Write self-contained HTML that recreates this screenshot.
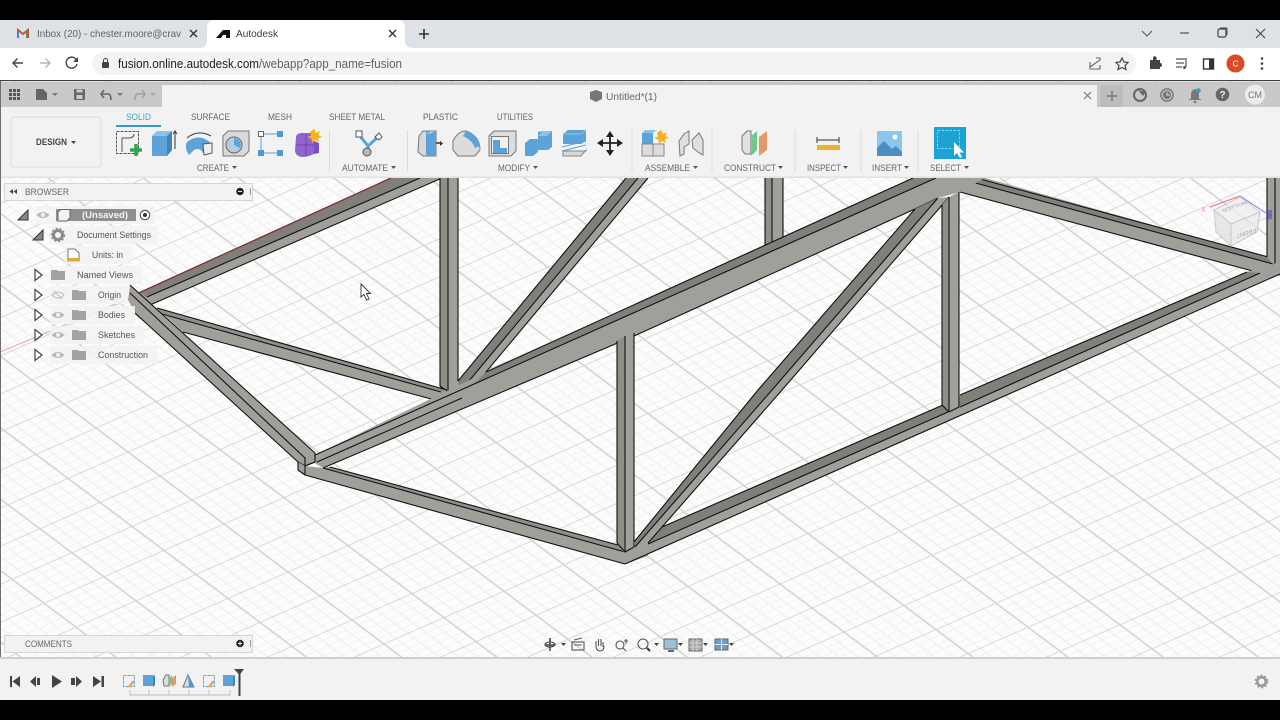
<!DOCTYPE html>
<html><head><meta charset="utf-8"><title>Autodesk</title>
<style>
html,body{margin:0;padding:0;background:#000;width:1280px;height:720px;overflow:hidden}
svg{display:block;filter:blur(.35px)}
text{font-family:"Liberation Sans",sans-serif;fill:#666;font-size:9px}
.t{font-size:9px;fill:#666}
.f{fill:#a09f9a}
.d{fill:#807f7a}
.m{fill:#8f8e89}
.ln{stroke:#111;stroke-width:1.1;fill:none;stroke-linejoin:round}
.row{fill:#f2f2f2;fill-opacity:.88}
.tree{font-size:9px;fill:#555}
</style></head><body>
<svg width="1280" height="720" viewBox="0 0 1280 720" xmlns="http://www.w3.org/2000/svg">
<defs>
<pattern id="grid" width="50" height="50" patternUnits="userSpaceOnUse" patternTransform="matrix(1.2 -.528 .64 .48 12 8)">
<rect width="50" height="50" fill="#fcfcfc"/>
<path d="M10 0V50M20 0V50M30 0V50M40 0V50M0 10H50M0 20H50M0 30H50M0 40H50" stroke="#efefef" stroke-width="1" fill="none"/>
<path d="M0 0V50M0 0H50M50 0V50M0 50H50" stroke="#d4d4d4" stroke-width="1.400" fill="none"/>
</pattern>
<g id="eye"><path d="M-6.500 0Q0 -6 6.500 0Q0 6 -6.500 0Z" fill="#b5b5b5"/><circle r="2.200" fill="#eee"/></g>
<path id="folder" d="M-7 -5H-1L0 -4H7V5H-7Z" fill="#a3a3a3"/>
<path id="tri" d="M-3 -5.500L4 0L-3 5.500Z" fill="#fff" stroke="#444" stroke-width="1.200"/>
<path id="solidtri" d="M5 -5V5H-5Z" fill="#888" stroke="#333" stroke-width="1"/>
</defs>

<rect width="1280" height="720" fill="#000"/>

<!-- browser chrome -->
<rect y="20" width="1280" height="28" fill="#dee1e6"/>
<path d="M199 48Q207 48 207 40V28Q207 20 215 20H397Q405 20 405 28V40Q405 48 413 48Z" fill="#fff"/>
<rect y="48" width="1280" height="32" fill="#fff"/>
<rect x="92" y="52" width="1044" height="23" rx="11.500" fill="#f1f3f4"/>
<path d="M18 38V30L23 34L28 30V38" fill="none" stroke="#d54c3f" stroke-width="2"/>
<path d="M27 38V30" stroke="#3d9a5c" stroke-width="2"/><path d="M18 38V31" stroke="#4a7fd0" stroke-width="2"/>
<text x="37" y="37" style="font-size:10.500px;fill:#5f6368" textLength="144" lengthAdjust="spacingAndGlyphs">Inbox (20) - chester.moore@crav</text>
<path d="M190 30L197 37M197 30L190 37" stroke="#333" stroke-width="1.400"/>
<path d="M216 38L223 30H230V38H226V35H223L221 38Z" fill="#111"/>
<text x="236" y="37" style="font-size:10.500px;fill:#3c4043" textLength="42" lengthAdjust="spacingAndGlyphs">Autodesk</text>
<path d="M389 30L396 37M396 30L389 37" stroke="#333" stroke-width="1.400"/>
<path d="M424 29V39M419 34H429" stroke="#333" stroke-width="1.600"/>
<path d="M1142 31L1147 36L1152 31" fill="none" stroke="#555" stroke-width="1"/>
<path d="M1180 33H1189" stroke="#444" stroke-width="1.100"/>
<rect x="1218" y="29" width="8" height="8" rx="1.500" fill="none" stroke="#444" stroke-width="1.200"/>
<path d="M1220 28H1227V35" fill="none" stroke="#444" stroke-width=".9"/>
<path d="M1256 29L1265 38M1265 29L1256 38" stroke="#444" stroke-width="1.100"/>
<path d="M23 63H13M17.500 58.500L13 63L17.500 67.500" fill="none" stroke="#444" stroke-width="1.400"/>
<path d="M40 63H50M45.500 58.500L50 63L45.500 67.500" fill="none" stroke="#b5b5b5" stroke-width="1.400"/>
<path d="M76.500 60A5.500 5.500 0 1 0 77 64" fill="none" stroke="#444" stroke-width="1.400"/><path d="M78 57V62H73Z" fill="#444"/>
<rect x="102" y="62" width="7" height="6" rx="1" fill="#444"/><path d="M103.500 62V60.500A2 2 0 0 1 107.500 60.500V62" fill="none" stroke="#444" stroke-width="1"/>
<text x="118" y="68" style="font-size:12.500px;fill:#202124" textLength="141" lengthAdjust="spacingAndGlyphs">fusion.online.autodesk.com</text>
<text x="259" y="68" style="font-size:12.500px;fill:#5f6368" textLength="143" lengthAdjust="spacingAndGlyphs">/webapp?app_name=fusion</text>
<path d="M1096 58H1100V60L1090 67M1090 62V69H1100V65" fill="none" stroke="#666" stroke-width="1.100"/>
<path d="M1122 58L1124 62L1128 62.500L1125 65.500L1126 69.500L1122 67.500L1118 69.500L1119 65.500L1116 62.500L1120 62Z" fill="none" stroke="#444" stroke-width="1.200"/>
<path d="M1150 60H1153V58A1.700 1.700 0 0 1 1156.500 58V60H1160V63A1.700 1.700 0 0 1 1160 67V69H1150Z" fill="#444"/>
<path d="M1176 59H1187M1176 63H1184M1176 67H1182" stroke="#555" stroke-width="1.200"/><path d="M1186 60V67" stroke="#555" stroke-width="1.200"/><circle cx="1184.500" cy="67.500" r="1.500" fill="#555"/>
<rect x="1203.500" y="59" width="10" height="10" fill="none" stroke="#333" stroke-width="1.400"/><rect x="1209" y="59" width="4.500" height="10" fill="#333"/>
<circle cx="1235.500" cy="63.500" r="9" fill="#dc4a22"/>
<text x="1232.500" y="66.500" style="font-size:8.500px;fill:#fff">C</text>
<circle cx="1262" cy="58.500" r="1.300" fill="#444"/><circle cx="1262" cy="63.500" r="1.300" fill="#444"/><circle cx="1262" cy="68.500" r="1.300" fill="#444"/>

<rect y="80" width="1280" height="1.500" fill="#3f3f3f"/>

<!-- viewport -->
<rect y="81" width="1280" height="619" fill="url(#grid)"/>
<path d="M0 352L132 297" stroke="#e2a6ab" stroke-width="1" fill="none"/>

<!-- TRUSS -->
<path class="f" d="M140 293L391 178H442L150 305Z"/>
<path class="d" d="M140 293L391 178H420L147 297Z"/>
<path d="M132 296L391 178" stroke="#7a2f3a" stroke-width="1.300" fill="none"/>
<path class="ln" d="M147 297L420 178M150 305L442 178"/>
<path class="f" d="M765 178H783V249L772 253L765 247Z"/>
<path class="m" d="M765 178H772V253L765 247Z"/>
<path class="ln" d="M765 178V247L772 253L783 249V178M772 178V253"/>
<path class="f" d="M440 178H458V390L448 396L440 388Z"/>
<path class="m" d="M440 178H448V396L440 388Z"/>
<path class="ln" d="M440 178V386L448 392M448 178V394M458 178V381"/>
<path class="f" d="M458 381L626 178H648L486 372L476 386L459 393Z"/>
<path class="d" d="M458 381L626 178H638L459 393Z"/>
<path class="ln" d="M458 381L626 178M459 393L638 178M476 384L648 178"/>
<path class="f" d="M157 308L447 390L435 400L183 332Z"/>
<path class="m" d="M157 308L447 390L441 392L162 314Z"/>
<path class="ln" d="M157 308L447 390M162 314L441 392M183 332L435 400"/>
<path class="f" d="M945 192L972 178H985L1267 257L1280 262V276L1260 273L960 192Z"/>
<path class="d" d="M980 179L1272 258L1273 264L972 182Z"/>
<path class="ln" d="M980 179L1272 258L1273 264L972 182M960 192L1260 273"/>
<path class="f" d="M1267 178H1280V270L1273 264L1267 257Z"/>
<path class="ln" d="M1267 178V257M1275 178V266"/>
<path class="f" d="M315 455L486 372L913 178H985L960 192L938 198L915 209L634 336L323 468L315 463Z"/>
<path class="d" d="M486 372L913 178H936L474 384Z"/>
<path class="ln" d="M315 455L936 178M486 372L913 178M317 462L462 398M323 468L634 336L915 209L938 198"/>
<path class="f" d="M130 285L315 453V462L305 466L298 462L135 313L128 300Z"/>
<path class="ln" d="M130 285L315 453V462L305 466L298 462L135 313M130 293L305 458V466"/>
<path class="f" d="M298 462L305 466L323 468L330 467L618 545L625 552L634 547L648 543L648 556L625 564L305 475L298 470Z"/>
<path class="m" d="M330 467L618 545L625 552L323 468Z"/>
<path class="ln" d="M298 462V470L305 475L625 564M305 466V475M305 466L315 462M330 467L618 545M323 468L625 552"/>
<path class="f" d="M617 341L625 334L634.500 333V547L625 554L617 543Z"/>
<path class="m" d="M617 341L625 336V554L617 543Z"/>
<path class="ln" d="M617 341V543L625 552L634 547V333M625 336V552"/>
<path class="f" d="M625 564L1280 274V262L1247 272L959 397L943 405L662 527L648 543L634 547Z"/>
<path class="d" d="M662 527L943 405L948 412L648 544Z"/>
<path class="d" d="M960 395L1247 272L1260 273L960 407Z"/>
<path class="ln" d="M625 564L1280 274M662 527L943 405M648 544L948 412M960 395L1247 272M960 407L1260 273"/>
<path class="f" d="M634 542L758 390L915 209L938 198L949 197L782 390L648 543L635 547Z"/>
<path class="d" d="M634 542L758 390L915 209L937.500 198.500L772 390L635 547Z"/>
<path class="ln" d="M634 542L758 390L915 209M635 547L772 390L937.500 198.500M648 543L782 390L949 197"/>
<path class="f" d="M942 205L949 197L959 192V407L949 412L942 405Z"/>
<path class="m" d="M942 205L949 197V412L942 405Z"/>
<path class="ln" d="M942 205V405L949 412L959 407V192M949 197V412"/>

<!-- view cube -->
<g opacity=".75">
<path d="M1210 207L1240 196" stroke="#d8657f" stroke-width="1.300"/>
<path d="M1240 196L1266 213" stroke="#7676cc" stroke-width="1.300"/>
<path d="M1268 210H1272V219H1268Z" fill="#6060c0"/>
<text x="1201" y="212" style="font-size:7px;fill:#d8657f">X</text>
<path d="M1214 210L1240 197L1260 212L1231 224Z" fill="#eee" stroke="#bbb"/>
<path d="M1214 210L1231 224V246L1216 232Z" fill="#e2e2e2" stroke="#bbb"/>
<path d="M1231 224L1260 212L1257 232L1231 246Z" fill="#e8e8e8" stroke="#bbb"/>
<text transform="matrix(.95 -.35 .6 .6 1224 212)" style="font-size:6px;fill:#888">BOTTOM</text>
<text transform="matrix(-.95 .3 0 -1 1256 228)" style="font-size:6px;fill:#888">FRONT</text>
</g>

<!-- top toolbar -->
<rect y="81.500" width="1280" height="96.500" fill="#f2f2f2"/>
<rect y="176.500" width="1280" height="1.500" fill="#e2e2e2"/>
<rect y="81.500" width="1280" height="3.500" fill="#c6c6c6"/>
<rect y="85" width="162" height="22" fill="#c9c9c9"/>
<rect x="1097" y="85" width="183" height="22" fill="#c9c9c9"/>
<rect x="1100" y="85" width="23" height="22" fill="#bdbdbd"/>
<rect x="0" y="81" width="1" height="619" fill="#6e6e6e"/>
<g fill="#555"><rect x="9" y="89" width="3" height="3"/><rect x="13" y="89" width="3" height="3"/><rect x="17" y="89" width="3" height="3"/><rect x="9" y="93" width="3" height="3"/><rect x="13" y="93" width="3" height="3"/><rect x="17" y="93" width="3" height="3"/><rect x="9" y="97" width="3" height="3"/><rect x="13" y="97" width="3" height="3"/><rect x="17" y="97" width="3" height="3"/></g>
<path d="M36 89H43L47 93V100H36Z" fill="#666"/><path d="M52 93H58L55 96Z" fill="#777"/>
<rect x="74" y="89" width="11" height="11" rx="1" fill="#666"/><rect x="76.500" y="89.500" width="6" height="3" fill="#ccc"/><rect x="76.500" y="95" width="6" height="4" fill="#ccc"/>
<path d="M104 90L101 94L104 98M101 94H108Q111 94 111 100" fill="none" stroke="#666" stroke-width="1.600"/><path d="M117 93H123L120 96Z" fill="#777"/>
<path d="M142 90L145 94L142 98M145 94H138Q135 94 135 100" fill="none" stroke="#a0a0a0" stroke-width="1.600"/><path d="M150 93H156L153 96Z" fill="#a5a5a5"/>
<path d="M590 92L596 90L602 92V99L596 102L590 99Z" fill="#777"/>
<text x="606" y="100" style="font-size:10.500px;fill:#666" textLength="51" lengthAdjust="spacingAndGlyphs">Untitled*(1)</text>
<path d="M1084 92L1091 99M1091 92L1084 99" stroke="#777" stroke-width="1.200"/>
<path d="M1112 91V101M1107 96H1117" stroke="#888" stroke-width="2"/>
<circle cx="1140" cy="95" r="6" fill="none" stroke="#666" stroke-width="2"/><path d="M1138 90L1146 92L1143 96Z" fill="#666"/>
<circle cx="1167" cy="95" r="7" fill="#888"/><circle cx="1167" cy="95" r="4.500" fill="#777" stroke="#ddd" stroke-width=".8"/><path d="M1167 92V95H1170" stroke="#ddd" fill="none"/>
<path d="M1195 89Q1199 90 1199 95V99H1201V100H1189V99H1191V95Q1191 90 1195 89Z" fill="#777"/><circle cx="1195" cy="102" r="1.300" fill="#777"/><circle cx="1198.500" cy="90.500" r="2.300" fill="#2a9fd0"/>
<circle cx="1222.500" cy="94.500" r="6.800" fill="#666"/><text x="1219.500" y="98" style="font-size:10px;font-weight:bold;fill:#eee">?</text>
<circle cx="1255" cy="94.500" r="10" fill="#ececec"/><text x="1248" y="98" style="font-size:9px;fill:#777" textLength="14">CM</text>

<text x="126" y="120" style="fill:#3f9fc6" textLength="25" lengthAdjust="spacingAndGlyphs">SOLID</text>
<rect x="116" y="125" width="45" height="2" fill="#2f9dc6"/>
<text x="191" y="120" class="t" textLength="39" lengthAdjust="spacingAndGlyphs">SURFACE</text>
<text x="268" y="120" class="t" textLength="24" lengthAdjust="spacingAndGlyphs">MESH</text>
<text x="329" y="120" class="t" textLength="56" lengthAdjust="spacingAndGlyphs">SHEET METAL</text>
<text x="423" y="120" class="t" textLength="35" lengthAdjust="spacingAndGlyphs">PLASTIC</text>
<text x="497" y="120" class="t" textLength="36" lengthAdjust="spacingAndGlyphs">UTILITIES</text>

<rect x="11" y="117" width="90" height="50" rx="3" fill="#f2f2f2" stroke="#dcdcdc"/>
<text x="36" y="145" style="fill:#444;font-weight:bold" textLength="31" lengthAdjust="spacingAndGlyphs">DESIGN</text>
<path d="M71 141H76L73.500 144Z" fill="#444"/>

<path d="M329.500 130V172M407.500 130V172M632 130V172M712 130V172M795 130V172M861 130V172M918 130V172" stroke="#dcdcdc"/>

<g>
<text x="197" y="171" class="t" textLength="32" lengthAdjust="spacingAndGlyphs">CREATE</text><path d="M232 166H237L234.500 169Z" fill="#555"/>
<text x="342" y="171" class="t" textLength="46" lengthAdjust="spacingAndGlyphs">AUTOMATE</text><path d="M391 166H396L393.500 169Z" fill="#555"/>
<text x="498" y="171" class="t" textLength="32" lengthAdjust="spacingAndGlyphs">MODIFY</text><path d="M533 166H538L535.500 169Z" fill="#555"/>
<text x="645" y="171" class="t" textLength="45" lengthAdjust="spacingAndGlyphs">ASSEMBLE</text><path d="M693 166H698L695.500 169Z" fill="#555"/>
<text x="724" y="171" class="t" textLength="52" lengthAdjust="spacingAndGlyphs">CONSTRUCT</text><path d="M778 166H783L780.500 169Z" fill="#555"/>
<text x="807" y="171" class="t" textLength="34" lengthAdjust="spacingAndGlyphs">INSPECT</text><path d="M843 166H848L845.500 169Z" fill="#555"/>
<text x="872" y="171" class="t" textLength="30" lengthAdjust="spacingAndGlyphs">INSERT</text><path d="M904 166H909L906.500 169Z" fill="#555"/>
<text x="930" y="171" class="t" textLength="31" lengthAdjust="spacingAndGlyphs">SELECT</text><path d="M964 166H969L966.500 169Z" fill="#555"/>
</g>

<!-- create icons -->
<rect x="116.500" y="131.500" width="22" height="22" fill="none" stroke="#555" stroke-dasharray="3 1"/>
<path d="M122 152V138H128Q134 138 134 134" fill="none" stroke="#555"/>
<path d="M130 150H142M136 144V156" stroke="#2ea44f" stroke-width="3.500"/>
<path d="M152 136L157 131H172V150L167 156H152Z" fill="#5ba3d9"/><path d="M167 136H152L157 131H172Z" fill="#8fc4ea"/><path d="M167 136V156L172 150V131Z" fill="#3f86bd"/>
<path d="M175 149V131M173 134L175 131L177 134" stroke="#333" fill="none"/>
<path d="M187 142Q200 132 212 144L211 153H203Q200 147 194 150L189 155Q184 148 187 142Z" fill="#5ba3d9"/><path d="M203 144L212 143V153L204 155Z" fill="#eee" stroke="#555"/><path d="M187 138Q198 129 211 136" fill="none" stroke="#444"/>
<path d="M223 136L228 131H249V151L244 156H223Z" fill="#d9d9d9" stroke="#777"/>
<circle cx="234" cy="145" r="8" fill="#b5cde0" stroke="#666"/><path d="M234 145V138A7 7 0 0 1 240 148Z" fill="#5ba3d9"/>
<path d="M262.500 134H278M261 137V150M262.500 153H278" stroke="#5ba3d9"/>
<rect x="258.500" y="131.500" width="5" height="5" fill="#fff" stroke="#666"/><rect x="277" y="131" width="6" height="6" fill="#4f9ad2"/><rect x="258" y="150" width="6" height="6" fill="#4f9ad2"/><rect x="277" y="150" width="6" height="6" fill="#4f9ad2"/>
<path d="M296 138Q296 133 302 133H314V154Q308 157 302 157Q295 156 295 150Z" fill="#9063d0"/><path d="M296 145H318M306 134V156" stroke="#6e45ad"/><path d="M314 141L319 143V153L314 154Z" fill="#7a4fc0"/>
<path d="M314 129L316 133L320 131L318.500 135L322 137L318 138.500L319 142L315 140L312 143L311.500 139L307.500 137L311 135.500L310 132Z" fill="#f5b21c"/>
<!-- automate -->
<path d="M360 136L368 146L378 137M368 146V151" fill="none" stroke="#5ba3d9" stroke-width="3"/>
<rect x="356" y="131" width="6" height="6" fill="#fff" stroke="#555"/><path d="M379 133L382 137L379 140L375 137Z" fill="#fff" stroke="#555"/><circle cx="367" cy="152" r="4" fill="#b8b8b8" stroke="#555"/>
<!-- modify -->
<path d="M419 136L423 131H436V156H423L418 152Z" fill="#d8d8d8" stroke="#777"/><path d="M426 131H436V156H426Z" fill="#5ba3d9"/><path d="M426 134L430 131H435L431 134Z" fill="#8fc4ea"/>
<path d="M436 143H441" stroke="#333" stroke-width="1.500"/><path d="M440 141L443 143.500L440 146Z" fill="#333"/>
<path d="M453 150V141Q458 131 466 131Q480 136 480 150L475 156H458Z" fill="#dcdcdc" stroke="#777"/><path d="M466 131Q478 135 480 146L475 148Q472 140 463 136Z" fill="#5ba3d9"/>
<path d="M489 136L494 131H516V151L511 156H489Z" fill="#dcdcdc" stroke="#777"/><rect x="491.500" y="136.500" width="17" height="17" fill="#f2f2f2" stroke="#777"/><path d="M493 140H500V148H507V153H493Z" fill="#5ba3d9"/>
<path d="M525 143L530 139H538V132L543 131H552V147L548 150H538V152L533 156H525Z" fill="#5ba3d9"/><path d="M538 136L543 131H552L547 136Z" fill="#8fc4ea"/>
<path d="M563 134L568 130H586V141L581 144H563Z" fill="#5ba3d9"/><path d="M563 134H581L586 130" fill="none" stroke="#8fc4ea"/>
<path d="M562 147L586 141M562 151L586 145" stroke="#5ba3d9" fill="none"/>
<path d="M563 151H586V150L581 156H563Z" fill="#d8d8d8" stroke="#888"/>
<path d="M610 134V152M600 143H620" stroke="#222" stroke-width="1.800"/>
<path d="M610 131L614 137H606ZM610 156L614 150H606ZM597 143L603 139V147ZM623 143L617 139V147Z" fill="#222"/>
<!-- assemble -->
<rect x="642" y="133" width="11" height="11" fill="#5ba3d9"/><path d="M653 133L657 130H645L642 133Z" fill="#8fc4ea"/>
<rect x="642" y="144" width="11" height="12" fill="#dcdcdc" stroke="#888"/><rect x="653" y="144" width="11" height="12" fill="#dcdcdc" stroke="#888"/>
<path d="M661 130L663 134L667 132L665.500 136L669 138L665 139L666 143L662 141L659 144L658.500 140L654.500 138L658 136.500L657 133Z" fill="#f5b21c"/>
<path d="M679 141L684 134L689 131V144L684 147V154L680 156Z" fill="#e0e0e0" stroke="#777"/><path d="M692 140L699 133L703 140V155L698 152L693 148Z" fill="#e0e0e0" stroke="#777"/>
<!-- construct -->
<path d="M742 136L747 131H751V154H745L742 150Z" fill="#e0e0e0" stroke="#777"/><path d="M751 136L757 131V150L751 156Z" fill="#6dcb8a"/>
<path d="M759 137L767 131V150L759 156Z" fill="#e39a6a"/>
<!-- inspect -->
<path d="M817 140H839M817 137V143M839 137V143" stroke="#333"/><rect x="817" y="145" width="23" height="5" fill="#eab42a"/>
<!-- insert -->
<rect x="877" y="131" width="25" height="25" fill="#8cc5ee"/><path d="M877 156V148L884 141L892 149L896 146L902 152V156Z" fill="#4b8ec4"/><circle cx="895" cy="137" r="2.500" fill="#fff"/>
<!-- select -->
<rect x="934" y="127" width="32" height="32" fill="#1ca3d4"/>
<rect x="937.500" y="130.500" width="22" height="18" fill="none" stroke="#7fdcef" stroke-dasharray="2.500 1.500"/>
<path d="M954 142V156L957 153L960 158L962 157L959.500 152.500H964Z" fill="#fff"/>

<!-- browser panel -->
<rect x="4.500" y="183.500" width="248" height="17" fill="#f2f2f2" stroke="#d5d5d5"/>
<path d="M13 189V194L9.500 191.500ZM17 189V194L13.500 191.500Z" fill="#444"/>
<text x="25" y="195" textLength="44" lengthAdjust="spacingAndGlyphs" style="fill:#666">BROWSER</text>
<circle cx="240" cy="191.500" r="3.800" fill="#222"/><path d="M238 191.500H242" stroke="#eee"/>
<path d="M250.500 188V195" stroke="#999"/>

<rect x="35" y="206" width="120" height="18" class="row"/>
<rect x="50" y="226" width="108" height="18" class="row"/>
<rect x="65" y="246" width="67" height="18" class="row"/>
<rect x="50" y="266" width="92" height="18" class="row"/>
<rect x="50" y="286" width="78" height="18" class="row"/>
<rect x="50" y="306" width="85" height="18" class="row"/>
<rect x="50" y="326" width="94" height="18" class="row"/>
<rect x="50" y="346" width="108" height="18" class="row"/>

<use href="#solidtri" x="23" y="215"/><use href="#eye" x="43" y="215"/>
<rect x="56" y="209" width="80" height="12" fill="#8f8f8f"/>
<path d="M58 212L61 209.500H70V218L67 221H58Z" fill="#f2f2f2" stroke="#666"/>
<text x="82" y="218" textLength="46" lengthAdjust="spacingAndGlyphs" style="fill:#f4f4f4;font-weight:bold">(Unsaved)</text>
<circle cx="145" cy="215" r="4.800" fill="#fff" stroke="#444"/><circle cx="145" cy="215" r="2" fill="#333"/>

<use href="#solidtri" x="38" y="235"/>
<circle cx="58" cy="235" r="4.500" fill="none" stroke="#8a8a8a" stroke-width="3"/><circle cx="58" cy="235" r="6.500" fill="none" stroke="#8a8a8a" stroke-width="1.500" stroke-dasharray="2 2"/>
<text x="77" y="238" class="tree" textLength="74" lengthAdjust="spacingAndGlyphs">Document Settings</text>

<path d="M68 249H75L79 253V261H68Z" fill="#fff" stroke="#777"/><rect x="67" y="258" width="12" height="3.500" fill="#d9ad3b"/>
<text x="92" y="258" class="tree" textLength="31" lengthAdjust="spacingAndGlyphs">Units: in</text>

<use href="#tri" x="38" y="275"/><use href="#folder" x="58" y="275"/>
<text x="77" y="278" class="tree" textLength="56" lengthAdjust="spacingAndGlyphs">Named Views</text>

<use href="#tri" x="38" y="295"/>
<path d="M52 295Q58 289 64 295Q58 301 52 295Z" fill="none" stroke="#bbb"/><path d="M54 291L62 299" stroke="#bbb"/>
<use href="#folder" x="79" y="295"/>
<text x="98" y="298" class="tree" textLength="23" lengthAdjust="spacingAndGlyphs">Origin</text>

<use href="#tri" x="38" y="315"/><use href="#eye" x="58" y="315"/><use href="#folder" x="79" y="315"/>
<text x="98" y="318" class="tree" textLength="27" lengthAdjust="spacingAndGlyphs">Bodies</text>

<use href="#tri" x="38" y="335"/><use href="#eye" x="58" y="335"/><use href="#folder" x="79" y="335"/>
<text x="98" y="338" class="tree" textLength="37" lengthAdjust="spacingAndGlyphs">Sketches</text>

<use href="#tri" x="38" y="355"/><use href="#eye" x="58" y="355"/><use href="#folder" x="79" y="355"/>
<text x="98" y="358" class="tree" textLength="50" lengthAdjust="spacingAndGlyphs">Construction</text>

<!-- cursor -->
<path d="M361 284V297L364 294.500L366.500 300L369 299L366.500 293.500H370.500Z" fill="#fff" stroke="#333" stroke-width=".9"/>

<!-- comments -->
<rect x="4.500" y="635.500" width="248" height="17" fill="#f2f2f2" stroke="#d5d5d5"/>
<text x="25" y="647" textLength="47" lengthAdjust="spacingAndGlyphs" style="fill:#666">COMMENTS</text>
<circle cx="240" cy="643.500" r="3.800" fill="#222"/><path d="M238 643.500H242M240 641.500V645.500" stroke="#eee"/>
<path d="M250.500 640V647" stroke="#999"/>

<!-- nav bar -->
<g fill="none" stroke="#666" stroke-width="1.100">
<path d="M550 638V651M545 645H555" stroke="#444" stroke-width="1.500"/><ellipse cx="550" cy="644.500" rx="5" ry="2.500" stroke="#444"/>
<rect x="572" y="642" width="12" height="8" stroke="#555"/><path d="M574 640L582 638M574 645H582" stroke="#555"/>
<path d="M596 647V641M598.500 646V639M601 646V639M603 647V642M596 647Q597 651 600 651Q604 651 604 646" stroke="#555"/>
<circle cx="620" cy="645" r="4" stroke="#555"/><path d="M623 648L626 651M626 639V644M624 641H628" stroke="#555"/>
<circle cx="643" cy="644" r="5" stroke="#555"/><path d="M647 648L650 651" stroke="#333" stroke-width="2"/>
</g>
<rect x="664" y="639" width="13" height="10" fill="#9cc0d8" stroke="#666"/><path d="M668 651H674" stroke="#666" stroke-width="2"/>
<rect x="689" y="639" width="13" height="12" fill="#aaa" stroke="#666"/><path d="M693 639V651M697 639V651M689 643H702M689 647H702" stroke="#ddd" stroke-width=".8"/>
<rect x="715" y="639" width="13" height="11" fill="#6f9fc8" stroke="#666"/><path d="M721.500 639V650M715 644.500H728" stroke="#eee"/>
<path d="M561 643H566L563.500 646ZM654 643H659L656.500 646ZM678 643H683L680.500 646ZM703 643H708L705.500 646ZM729 643H734L731.500 646Z" fill="#444"/>

<!-- timeline bar -->
<rect y="657" width="1280" height="2" fill="#cfcfcf"/>
<rect y="659" width="1280" height="41" fill="#f2f2f2"/>
<g fill="#444">
<path d="M10 676H12V687H10ZM20 676V687L12.500 681.500Z"/>
<path d="M36 676V687L30 681.500ZM37 678H40V685H37Z"/>
<path d="M52 675L62 681.500L52 688Z"/>
<path d="M76 676V687L82 681.500ZM71 678H75V685H71Z"/>
<path d="M93 676V687L101 681.500ZM101.500 676H104V687H101.500Z"/>
</g>
<rect x="123.500" y="675.500" width="11" height="11" fill="none" stroke="#5ba3d9" stroke-dasharray="3 1"/><path d="M129 687L134 681" stroke="#e8a33d" stroke-width="2.500"/>
<rect x="143" y="675" width="10" height="11" fill="#5ba3d9"/><path d="M153 676L155 675V685L153 687" fill="#3f86bd"/>
<path d="M163 680L166 675H169V686H164Z" fill="#ddd" stroke="#777"/><path d="M169 678L172 675V684L169 687Z" fill="#6dcb8a"/><path d="M172 678L176 675V684L172 687Z" fill="#e39a6a"/>
<path d="M188 675L194 687H183Z" fill="#cfe0ee" stroke="#777"/><path d="M188 675L194 687H189Z" fill="#4f9ad2"/>
<rect x="203.500" y="675.500" width="11" height="11" fill="none" stroke="#5ba3d9" stroke-dasharray="3 1"/><path d="M209 687L214 681" stroke="#e8a33d" stroke-width="2.500"/>
<rect x="223" y="675" width="10" height="11" fill="#5ba3d9"/><path d="M233 676L235 675V685L233 687" fill="#3f86bd"/>
<path d="M130 690V695H230V690M149 690V695M169 690V695M189 690V695M209 690V695" fill="none" stroke="#bdbdbd"/>
<path d="M234 669H244L239.500 675Z" fill="#444"/><rect x="238.500" y="672" width="2" height="24" fill="#444"/>
<circle cx="1261.500" cy="681.500" r="4.300" fill="none" stroke="#9a9a9a" stroke-width="2.600"/><circle cx="1261.500" cy="681.500" r="6.200" fill="none" stroke="#9a9a9a" stroke-width="1.400" stroke-dasharray="2 2"/>

<rect y="0" width="1280" height="20" fill="#000"/>
<rect y="700" width="1280" height="20" fill="#000"/>
</svg>
</body></html>
